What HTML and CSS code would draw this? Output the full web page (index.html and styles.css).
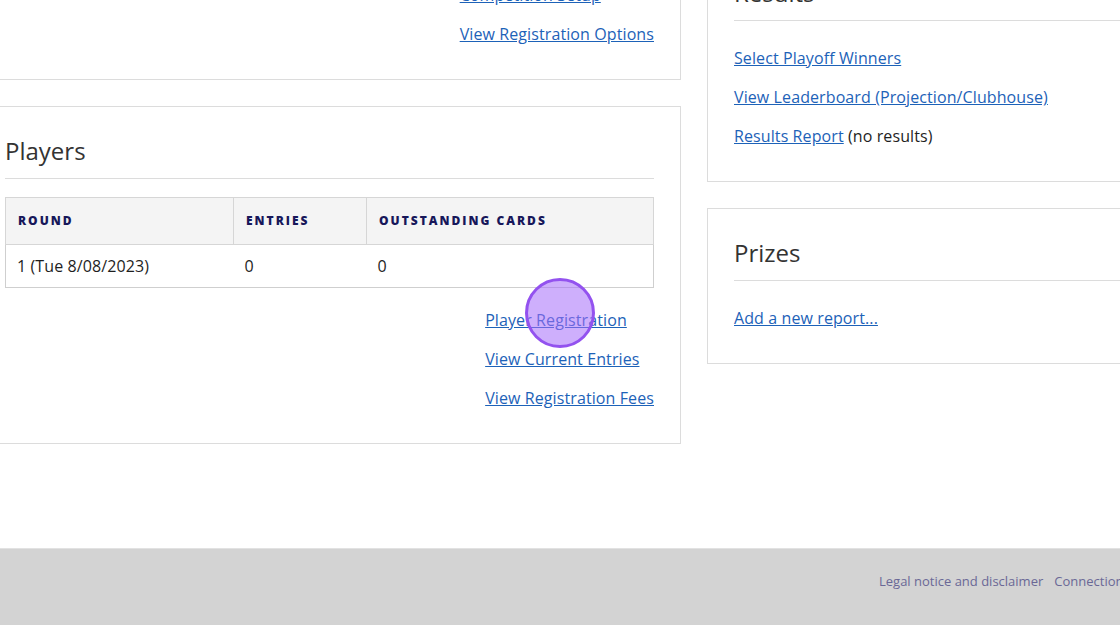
FILE: index.html
```html
<!DOCTYPE html>
<html lang="en">
<head>
    <meta charset="UTF-8">
    <meta name="viewport" content="width=device-width, initial-scale=1.0">
    <title>Competition - Players</title>
    <link rel="stylesheet" href="styles.css">
</head>
<body>
    <!-- 메인 영역 -->
    <main class="page">
        <!-- 왼쪽 컬럼 -->
        <div class="col col-left">
            <section class="panel">
                <h2>Competition</h2>
                <div class="actions">
                    <ul>
                        <li><a href="#">Competition Setup</a></li>
                        <li><a href="#">View Registration Options</a></li>
                    </ul>
                </div>
            </section>

            <section class="panel">
                <h2>Players</h2>
                <table class="grid">
                    <thead>
                        <tr>
                            <th class="c-round">Round</th>
                            <th class="c-entries">Entries</th>
                            <th>Outstanding Cards</th>
                        </tr>
                    </thead>
                    <tbody>
                        <tr>
                            <td>1 (Tue 8/08/2023)</td>
                            <td>0</td>
                            <td>0</td>
                        </tr>
                    </tbody>
                </table>
                <div class="actions actions-table">
                    <ul>
                        <li><a href="#">Player Registration</a></li>
                        <li><a href="#">View Current Entries</a></li>
                        <li><a href="#">View Registration Fees</a></li>
                    </ul>
                </div>
            </section>
        </div>

        <!-- 오른쪽 컬럼 -->
        <div class="col col-right">
            <section class="panel">
                <h2>Results</h2>
                <ul class="links">
                    <li><a href="#">Select Playoff Winners</a></li>
                    <li><a href="#">View Leaderboard (Projection/Clubhouse)</a></li>
                    <li><a href="#">Results Report</a> (no results)</li>
                </ul>
            </section>

            <section class="panel">
                <h2>Prizes</h2>
                <ul class="links">
                    <li><a href="#">Add a new report...</a></li>
                </ul>
            </section>
        </div>
    </main>

    <!-- 하단 영역 -->
    <footer class="foot">
        <nav class="foot-nav">
            <a href="#">Legal notice and disclaimer</a>
            <a href="#">Connection status</a>
        </nav>
    </footer>

    <!-- 클릭 표시 원 -->
    <div class="clicker"></div>
</body>
</html>
```

FILE: styles.css
```css
/* 공통 변수 */
:root{
    --link: #1d62b8;
    --line: #dcdcdc;
    --gap: 26px;
}

body{
    margin: 0;
    overflow: hidden;
    font-family: "Open Sans", "Liberation Sans", sans-serif;
    font-size: 16px;
    letter-spacing: .1px;
    color: #1e1e1e;
    background: #fff;
}
a{
    color: var(--link);
    text-decoration: underline;
}
ul{
    margin: 0;
    padding: 0;
    list-style: none;
}

/* 화면이 스크롤된 상태 - 위/왼쪽이 잘려 보임 */
.page{
    display: grid;
    grid-template-columns: 703px 460px;
    column-gap: var(--gap);
    align-items: start;
    margin: -115px 0 0 -22px;
}
.col{
    display: flex;
    flex-direction: column;
    gap: var(--gap);
}
.col-right{
    padding-top: 63px;
}

.panel{
    border: 1px solid var(--line);
    padding: 29px 26px 33px;
    background: #fff;
}
.panel h2{
    margin: 0;
    padding-bottom: 13px;
    border-bottom: 1px solid var(--line);
    font-size: 24px;
    line-height: 29px;
    font-weight: 400;
    letter-spacing: 0;
    color: #333;
}

/* 링크 목록 */
.links,
.actions ul{
    margin-top: 25px;
}
.links li,
.actions li{
    line-height: 24px;
}
.links li + li,
.actions li + li{
    margin-top: 15px;
}
/* 오른쪽 정렬 블럭(안쪽은 왼쪽 정렬) */
.actions{
    display: flex;
    justify-content: flex-end;
}
.actions-table ul{
    margin-top: 20px;
}

/* 테이블 */
.grid{
    width: 100%;
    margin-top: 18px;
    border-collapse: collapse;
    border: 1px solid #cfcfcf;
}
.grid th{
    padding: 15px 12px;
    background: #f4f4f4;
    border: 1px solid #d6d6d6;
    text-align: left;
    text-transform: uppercase;
    font-size: 12px;
    line-height: 16px;
    font-weight: 800;
    letter-spacing: 2px;
    color: #17175a;
}
.grid td{
    padding: 9px 11px;
    line-height: 24px;
    border-top: 1px solid #d6d6d6;
}
.c-round{
    width: 203px;
}
.c-entries{
    width: 108px;
}

/* 푸터 */
.foot{
    margin-top: 104px;
    height: 77px;
    background: #d3d3d3;
    border-top: 1px solid #e2e2e2;
}
.foot-nav{
    display: flex;
    gap: 11px;
    padding: 23px 0 0 879px;
    white-space: nowrap;
}
.foot-nav a{
    font-size: 13px;
    line-height: 18px;
    letter-spacing: 0;
    color: #6a6896;
    text-decoration: none;
}

/* 클릭 위치 표시 - 위에 겹침 */
.clicker{
    position: fixed;
    top: 278px;
    left: 525px;
    width: 64px;
    height: 64px;
    border-radius: 50%;
    border: 3px solid #9352ef;
    background: rgba(165, 110, 250, .55);
}
```
